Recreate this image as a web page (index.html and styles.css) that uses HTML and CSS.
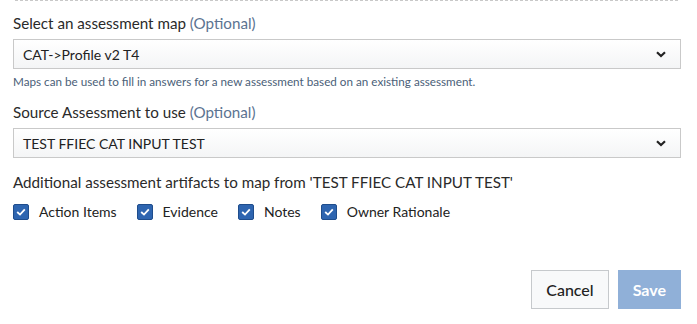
FILE: index.html
```html
<!DOCTYPE html>
<html>
  <head>
    <title>Map assessment</title>
    <link rel="stylesheet" href="styles.css">
  </head>
  <body>
    <div class="dialog">
      <div class="divider"></div>

      <div class="field">
        <label class="field-label">Select an assessment map <span class="optional">(Optional)</span></label>
        <div class="select">
          <span>CAT-&gt;Profile v2 T4</span>
          <svg class="chevron" width="10" height="7" viewBox="0 0 10 7"><path d="M1 1.2 L5 5 L9 1.2" fill="none" stroke="#222" stroke-width="2.2"/></svg>
        </div>
        <div class="help">Maps can be used to fill in answers for a new assessment based on an existing assessment.</div>
      </div>

      <div class="field">
        <label class="field-label">Source Assessment to use <span class="optional">(Optional)</span></label>
        <div class="select">
          <span>TEST FFIEC CAT INPUT TEST</span>
          <svg class="chevron" width="10" height="7" viewBox="0 0 10 7"><path d="M1 1.2 L5 5 L9 1.2" fill="none" stroke="#222" stroke-width="2.2"/></svg>
        </div>
      </div>

      <div class="field">
        <div class="field-label">Additional assessment artifacts to map from 'TEST FFIEC CAT INPUT TEST'</div>
        <div class="checks">
          <label class="check"><span class="box"><svg width="10" height="8" viewBox="0 0 10 8"><path d="M1.2 4 L4 6.6 L8.8 1.4" fill="none" stroke="#fff" stroke-width="1.8"/></svg></span>Action Items</label>
          <label class="check"><span class="box"><svg width="10" height="8" viewBox="0 0 10 8"><path d="M1.2 4 L4 6.6 L8.8 1.4" fill="none" stroke="#fff" stroke-width="1.8"/></svg></span>Evidence</label>
          <label class="check"><span class="box"><svg width="10" height="8" viewBox="0 0 10 8"><path d="M1.2 4 L4 6.6 L8.8 1.4" fill="none" stroke="#fff" stroke-width="1.8"/></svg></span>Notes</label>
          <label class="check"><span class="box"><svg width="10" height="8" viewBox="0 0 10 8"><path d="M1.2 4 L4 6.6 L8.8 1.4" fill="none" stroke="#fff" stroke-width="1.8"/></svg></span>Owner Rationale</label>
        </div>
      </div>

      <div class="actions">
        <button class="btn btn-cancel">Cancel</button>
        <button class="btn btn-save">Save</button>
      </div>
    </div>
  </body>
</html>
```

FILE: styles.css
```css
body {
  margin: 0;
  background: #fff;
  color: #222;
  font-family: Lato, "Open Sans", sans-serif;
  font-size: 15px;
}
.dialog {
  padding: 0 16px 0 13px;
}
.divider {
  margin: 0 3px 0 2px;
  border-top: 1px dashed #c8c8c8;
  height: 0;
}
.field {
  margin-top: 15px;
}
.divider + .field {
  margin-top: 13px;
}
.field-label {
  display: block;
  line-height: 18px;
  margin-bottom: 7px;
  font-size: 15.2px;
  color: #2a2a2a;
}
.optional {
  color: #5b7391;
}
.select {
  display: flex;
  align-items: center;
  justify-content: space-between;
  height: 28px;
  padding: 0 14px 0 9px;
  border: 1px solid #c9c9c9;
  background: linear-gradient(#fff, #f4f5f6);
  font-size: 14px;
  color: #222;
}
.help {
  margin-top: 6px;
  line-height: 13px;
  font-size: 11.7px;
  color: #4a6078;
}
.checks {
  display: flex;
  gap: 20px;
  margin-top: 12px;
}
.check {
  display: flex;
  align-items: center;
  gap: 10px;
  font-size: 14px;
}
.box {
  display: flex;
  align-items: center;
  justify-content: center;
  width: 14px;
  height: 14px;
  border: 1px solid #1f4d8c;
  background: #2e65b0;
  border-radius: 2px;
}
.actions {
  display: flex;
  justify-content: flex-end;
  gap: 9px;
  margin-top: 50px;
}
.btn {
  height: 39px;
  padding: 0 14px;
  font-family: Lato, sans-serif;
  font-size: 16px;
  border-radius: 0;
}
.btn-cancel {
  border: 1px solid #c6c9cc;
  background: #f8f9fa;
  color: #222;
  font-weight: 500;
}
.btn-save {
  border: 1px solid #90b0d8;
  background: #90b0d8;
  color: #fff;
  font-weight: 700;
}
```
